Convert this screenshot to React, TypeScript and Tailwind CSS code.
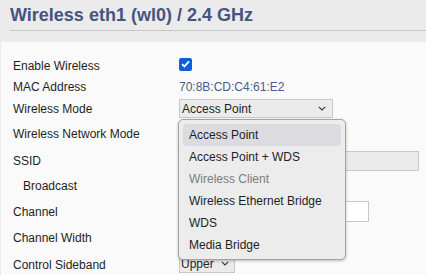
import React from 'react';

const modes = [
  { label: 'Access Point', active: true },
  { label: 'Access Point + WDS' },
  { label: 'Wireless Client', disabled: true },
  { label: 'Wireless Ethernet Bridge' },
  { label: 'WDS' },
  { label: 'Media Bridge' },
];

function Chevron() {
  return (
    <svg width="8" height="5" viewBox="0 0 8 5" className="shrink-0">
      <path d="M0.8 0.8 L4 4 L7.2 0.8" fill="none" stroke="#333" strokeWidth="1.1" />
    </svg>
  );
}

function Row({ label, h, indent, children }: { label: string; h: string; indent?: boolean; children?: React.ReactNode }) {
  return (
    <div className={`flex items-center ${h}`}>
      <div className={`w-[166px] shrink-0 ${indent ? 'pl-[10px]' : ''}`}>{label}</div>
      <div className="relative flex flex-1 items-center">{children}</div>
    </div>
  );
}

export default function App() {
  return (
    <div
      className="h-[275px] w-[426px] overflow-hidden bg-[#ebebeb] text-[12px] text-[#1e1e1e]"
      style={{ fontFamily: '"Liberation Sans", Arial, sans-serif' }}
    >
      {/* Header */}
      <div className="ml-[10px] h-[31px] border-b border-[#c6c6c6] pt-[4px]">
        <h1 className="text-[18px] font-bold leading-[22px] text-[#475380]">Wireless eth1 (wl0) / 2.4 GHz</h1>
      </div>

      {/* Settings panel */}
      <div className="ml-px mt-[11px] h-[300px] bg-[#fafafa] pl-[12px] pt-[13px]">
        <Row label="Enable Wireless" h="h-[21px]">
          <div className="-mt-[3px] flex h-[13px] w-[13px] items-center justify-center rounded-[2px] bg-[#0b5fd8]">
            <svg width="9" height="8" viewBox="0 0 9 8">
              <path d="M1 4.2 L3.4 6.4 L8 1.4" fill="none" stroke="#fff" strokeWidth="1.8" />
            </svg>
          </div>
        </Row>
        <Row label="MAC Address" h="h-[21px]">
          <span className="text-[#4b5b8e]">70:8B:CD:C4:61:E2</span>
        </Row>
        <Row label="Wireless Mode" h="h-[23px]">
          <div className="flex h-[19px] w-[154px] items-center justify-between border border-[#c8c8c8] bg-[#ebebeb] pl-[2px] pr-[6px]">
            <span>Access Point</span>
            <Chevron />
          </div>
          {/* Open option list */}
          <div className="absolute left-[-1px] top-[20px] z-10 w-[168px] rounded-[5px] border border-[#a3a3a3] bg-[#ececec] px-[4px] pb-[3px] pt-[4px] shadow-[0_1px_3px_rgba(0,0,0,0.25)]">
            {modes.map((m) => (
              <div
                key={m.label}
                className={`flex h-[22px] items-center rounded-[4px] pl-[6px] ${m.active ? 'bg-[#dcdce0]' : ''} ${m.disabled ? 'text-[#7d7d7d]' : ''}`}
              >
                {m.label}
              </div>
            ))}
          </div>
        </Row>
        <Row label="Wireless Network Mode" h="h-[28px]" />
        <Row label="SSID" h="h-[25px]">
          <div className="h-[20px] w-[240px] border border-[#c8c8c8] bg-[#ebebeb]" />
        </Row>
        <Row label="Broadcast" h="h-[26px]" indent />
        <Row label="Channel" h="h-[25px]">
          <div className="h-[21px] w-[190px] border border-[#c8c8c8] bg-white" />
        </Row>
        <Row label="Channel Width" h="h-[27px]" />
        <Row label="Control Sideband" h="h-[27px]">
          <div className="-mt-[2px] flex h-[19px] w-[56px] items-center gap-[7px] border border-[#c8c8c8] bg-[#ebebeb] pl-px">
            <span>Upper</span>
            <Chevron />
          </div>
        </Row>
      </div>
    </div>
  );
}
